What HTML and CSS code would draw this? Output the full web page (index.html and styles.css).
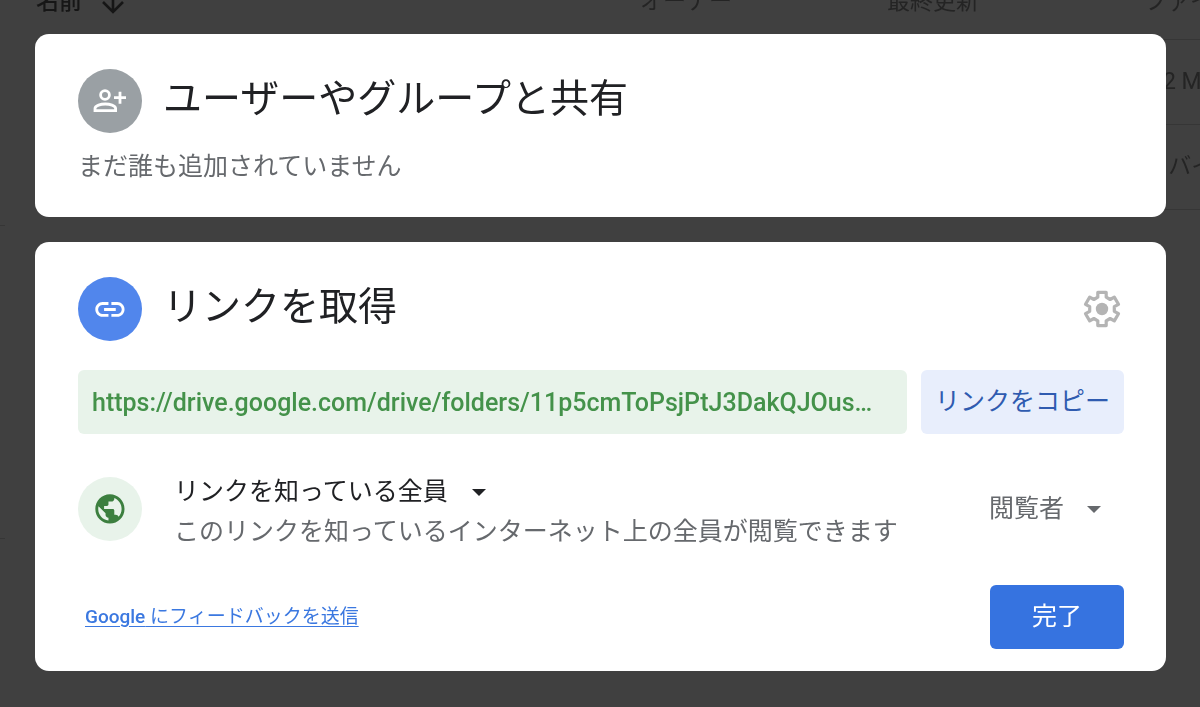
FILE: index.html
```
<!DOCTYPE html>
<html lang="ja">
<head>
    <meta charset="UTF-8">
    <meta name="viewport" content="width=device-width, initial-scale=1.0">
    <title>リンクを取得</title>
    <link rel="stylesheet" href="styles.css">
</head>
<body>
    <!-- ファイル一覧(ダイアログの背面) -->
    <div class="backdrop">
        <div class="sidebar">
            <div class="sidebar-top"></div>
            <div class="sidebar-middle"></div>
        </div>
        <table class="files">
            <thead>
                <tr>
                    <th class="col-name">名前
                        <svg class="arrow" viewBox="0 0 24 24"><path d="M12 0v20M2 11l10 10 10-10"/></svg>
                    </th>
                    <th class="col-owner">オーナー</th>
                    <th class="col-date">最終更新</th>
                    <th class="col-size">ファイルサイズ</th>
                </tr>
            </thead>
            <tbody>
                <tr><td></td><td></td><td></td><td>1.2 MB</td></tr>
                <tr><td></td><td></td><td></td><td>0&nbsp; バイト</td></tr>
            </tbody>
        </table>
    </div>

    <main class="dialog">
        <section class="card card-share">
            <div class="card-header">
                <svg class="badge badge-gray" viewBox="0 0 64 64">
                    <g fill="none" stroke="#fff" stroke-width="2.8">
                        <circle cx="27" cy="26" r="4.4"/>
                        <path d="M17 41.6v-2c0-3.2 6-4.6 10.3-4.6s10.3 1.4 10.3 4.6v2z"/>
                        <path d="M36 28.7h12M42 22.7v12"/>
                    </g>
                </svg>
                <h1>ユーザーやグループと共有</h1>
            </div>
            <p class="empty">まだ誰も追加されていません</p>
        </section>

        <section class="card card-link">
            <div class="card-header">
                <svg class="badge badge-blue" viewBox="0 0 64 64">
                    <path fill="#fff" transform="translate(14.4 14.9) scale(1.46)" d="M3.9 12c0-1.71 1.39-3.1 3.1-3.1h4V7H7c-2.76 0-5 2.24-5 5s2.24 5 5 5h4v-1.9H7c-1.71 0-3.1-1.39-3.1-3.1zM8 13h8v-2H8v2zm9-6h-4v1.9h4c1.71 0 3.1 1.39 3.1 3.1s-1.39 3.1-3.1 3.1h-4V17h4c2.76 0 5-2.24 5-5s-2.24-5-5-5z"/>
                </svg>
                <h1>リンクを取得</h1>
                <button type="button" class="settings" aria-label="設定">
                    <svg viewBox="-22 -22 44 44">
                        <path fill="none" stroke="#b4b4b4" stroke-width="3.2" stroke-linejoin="round" d="M-4.2-11.8L-4.2-16.6H4.2L4.2-11.8L8.1-9.5L12.3-11.9L16.5-4.7L12.3-2.3V2.3L16.5 4.7L12.3 11.9L8.1 9.5L4.2 11.8L4.2 16.6H-4.2L-4.2 11.8L-8.1 9.5L-12.3 11.9L-16.5 4.7L-12.3 2.3V-2.3L-16.5-4.7L-12.3-11.9L-8.1-9.5Z"/>
                        <circle r="6.2" fill="#b4b4b4"/>
                    </svg>
                </button>
            </div>

            <div class="link-row">
                <input type="text" class="url" aria-label="共有リンク" readonly value="https://drive.google.com/drive/folders/11p5cmToPsjPtJ3DakQJOus…">
                <button type="button" class="copy">リンクをコピー</button>
            </div>

            <div class="access">
                <svg class="badge badge-green" viewBox="0 0 64 64">
                    <path fill="#3c7f3f" transform="translate(14.4 14.4) scale(1.46)" d="M12 2C6.48 2 2 6.48 2 12s4.48 10 10 10 10-4.48 10-10S17.52 2 12 2zm-1 17.93c-3.95-.49-7-3.85-7-7.93 0-.62.08-1.21.21-1.79L9 15v1c0 1.1.9 2 2 2v1.93zm6.9-2.54c-.26-.81-1-1.39-1.9-1.39h-1v-3c0-.55-.45-1-1-1H8v-2h2c.55 0 1-.45 1-1V7h2c1.1 0 2-.9 2-2v-.41c2.93 1.19 5 4.06 5 7.41 0 2.08-.8 3.97-2.1 5.39z"/>
                </svg>
                <div class="access-text">
                    <div class="dropdown">
                        <select id="scope" aria-label="アクセス範囲">
                            <option>リンクを知っている全員</option>
                        </select>
                    </div>
                    <label for="scope">このリンクを知っているインターネット上の全員が閲覧できます</label>
                </div>
                <div class="dropdown dropdown-role">
                    <select aria-label="役割">
                        <option>閲覧者</option>
                    </select>
                </div>
            </div>

            <div class="card-footer">
                <a href="#"><b>Google</b> にフィードバックを送信</a>
                <button type="button" class="done">完了</button>
            </div>
        </section>
    </main>
</body>
</html>
```
FILE: styles.css
```
* {
    box-sizing: border-box;
}
body {
    margin: 0;
    min-height: 100vh;
    background-color: #404040;
    color: #202124;
    font-family: Roboto, "Noto Sans CJK JP", sans-serif;
    font-size: 25px;
    line-height: 40px;
}
h1, p {
    margin: 0;
}
button, input, select {
    font: inherit;
    color: inherit;
    margin: 0;
    padding: 0;
    border: none;
    background: none;
}
button {
    cursor: pointer;
}

/* 背面の一覧 */
.backdrop {
    position: fixed;
    inset: 0;
    overflow: hidden;
    display: flex;
    gap: 31px;
    color: #242424;
}
.sidebar {
    flex: 0 0 5px;
}
.sidebar-top, .sidebar-middle {
    border-bottom: 1px solid #363636;
}
.sidebar-top {
    height: 226px;
}
.sidebar-middle {
    height: 313px;
}
.files {
    flex: none;
    align-self: flex-start;
    margin-top: -34px;
    table-layout: fixed;
    width: 1320px;
    border-collapse: collapse;
    font-size: 23px;
    text-align: left;
}
.files th {
    height: 73px;
    padding: 0;
    font-weight: 400;
    border-bottom: 1px solid #363636;
}
.files td {
    height: 85px;
    padding: 0;
    border-bottom: 1px solid #363636;
}
.files .col-name {
    width: 604px;
    color: #161616;
    font-weight: 500;
}
.col-owner {
    width: 247px;
}
.col-date {
    width: 257px;
}
.arrow {
    width: 24px;
    height: 24px;
    margin-left: 13px;
    vertical-align: middle;
    fill: none;
    stroke: #161616;
    stroke-width: 2.6;
}

/* ダイアログ */
.dialog {
    position: relative;
    display: flex;
    flex-direction: column;
    gap: 25px;
    padding: 34px 34px 34px 35px;
}
.card {
    padding: 35px 42px 30px 43px;
    background-color: #fff;
    border-radius: 14px;
}
.card-link {
    padding-bottom: 22px;
}
.card-header {
    display: flex;
    align-items: center;
    gap: 21px;
}
.card-header h1 {
    flex: 1;
    padding-bottom: 4px;
    font-size: 39px;
    font-weight: 400;
    line-height: 60px;
}
.badge {
    flex: none;
    width: 64px;
    height: 64px;
    border-radius: 50%;
}
.badge-gray {
    background-color: #9aa0a4;
}
.badge-blue {
    background-color: #5186ec;
}
.badge-green {
    background-color: #e8f3ea;
}
.empty {
    margin-top: 14px;
    color: #66696d;
}
.settings svg {
    display: block;
    width: 44px;
    height: 44px;
}

.link-row {
    display: flex;
    gap: 14px;
    margin-top: 29px;
}
.url {
    flex: 1;
    min-width: 0;
    height: 64px;
    padding: 0 14px;
    border-radius: 6px;
    background-color: #e8f3ea;
    color: #44924a;
    font-weight: 500;
    text-overflow: ellipsis;
}
.copy {
    height: 64px;
    padding: 0 14px;
    border-radius: 6px;
    background-color: #e8eefc;
    color: #2f5bb0;
}

.access {
    display: flex;
    align-items: center;
    margin-top: 32px;
}
.access-text {
    flex: 1;
    margin-left: 32px;
    padding-top: 6px;
    color: #66696d;
}
.access-text label {
    display: block;
}
.dropdown {
    position: relative;
    display: block;
    width: fit-content;
    color: #202124;
}
.dropdown select {
    display: block;
    height: 40px;
    padding-right: 36px;
    appearance: none;
}
.dropdown::after {
    content: "";
    position: absolute;
    top: 17px;
    right: 0;
    border: 7px solid transparent;
    border-top-color: currentColor;
    border-bottom: none;
    pointer-events: none;
}
.dropdown-role {
    margin-right: 23px;
    color: #66696d;
}

.card-footer {
    display: flex;
    align-items: center;
    justify-content: space-between;
    margin-top: 33px;
}
.card-footer a {
    margin-left: 7px;
    color: #3b78e0;
    font-size: 19px;
    text-underline-offset: 3px;
}
.card-footer b {
    font-weight: 500;
}
.done {
    height: 64px;
    padding: 0 42px;
    border-radius: 6px;
    background-color: #3673e0;
    color: #fff;
}
```
